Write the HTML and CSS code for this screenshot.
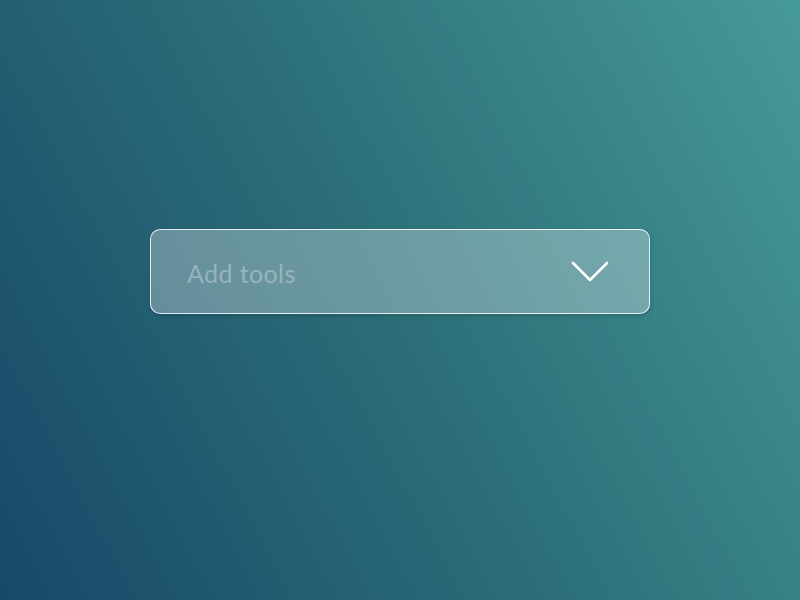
FILE: index.html
```html
<!DOCTYPE html>
<html lang="en">
<head>
  <meta charset="UTF-8" />
  <title>Add tools</title>
  <link rel="stylesheet" href="styles.css">
</head>
<body>
  <div class="stage">
    <div class="select">
      <span class="placeholder">Add tools</span>
      <svg class="chevron" width="38" height="22" viewBox="0 0 38 22">
        <polyline points="2,2 19,19 36,2" fill="none" stroke="#fff" stroke-width="2.6" stroke-linecap="round" stroke-linejoin="round"/>
      </svg>
    </div>
  </div>
</body>
</html>
```
FILE: styles.css
```css
html, body {
  margin: 0;
  height: 100%;
}
body {
  font-family: Lato, "Open Sans", sans-serif;
  background: linear-gradient(62deg, #174869 0%, #2c6f78 50%, #46999a 100%);
}
.stage {
  height: 100%;
  display: flex;
  justify-content: center;
  padding-top: 229px;
  box-sizing: border-box;
}
.select {
  width: 500px;
  height: 85px;
  box-sizing: border-box;
  border: 1.5px solid rgba(255, 255, 255, 0.85);
  border-radius: 10px;
  background: rgba(255, 255, 255, 0.3);
  box-shadow: 1px 2px 4px rgba(0, 0, 0, 0.15);
  display: flex;
  align-items: center;
  justify-content: space-between;
  padding: 0 40px 0 36px;
}
.placeholder {
  font-size: 25px;
  color: rgba(255, 255, 255, 0.33);
  letter-spacing: 0.4px;
  margin-top: 2px;
}
.chevron {
  display: block;
}
```
